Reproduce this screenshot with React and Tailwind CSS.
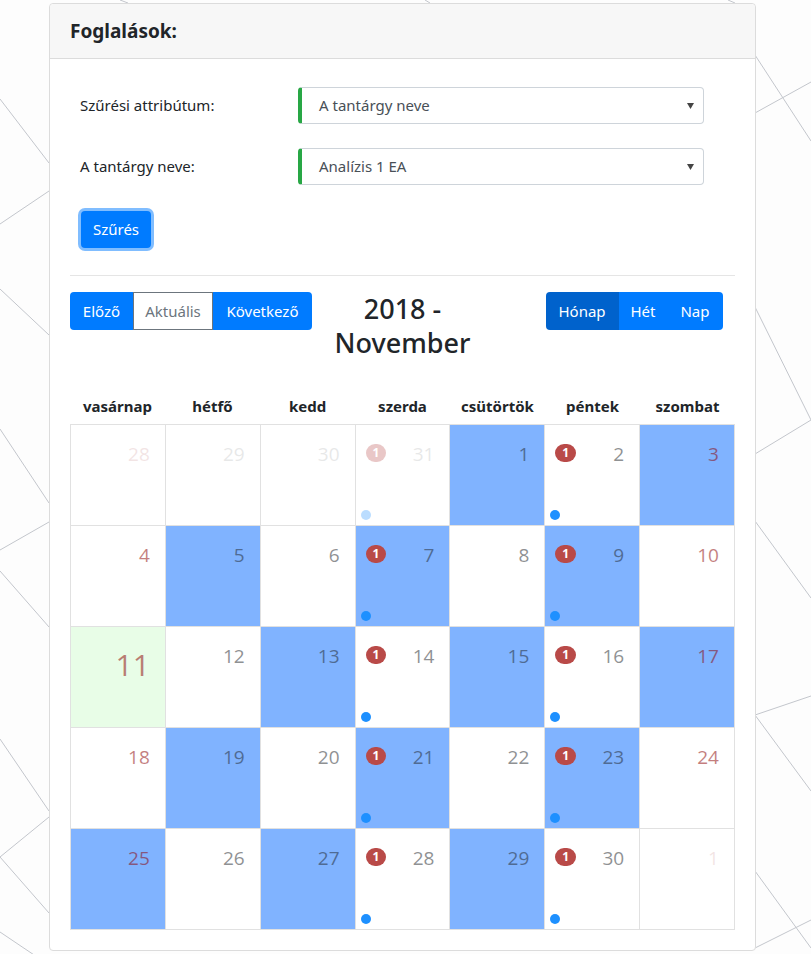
import React from 'react';

const weekdays = ['vasárnap', 'hétfő', 'kedd', 'szerda', 'csütörtök', 'péntek', 'szombat'];

// background scribbles (decorative drawing behind the card)
const bgLines = [
  [0, 99, 49, 163], [0, 224, 49, 191], [0, 289, 49, 335], [0, 429, 49, 503],
  [0, 550, 49, 522], [0, 571, 49, 627], [0, 739, 49, 811], [0, 857, 49, 817],
  [0, 857, 49, 913], [0, 932, 49, 965],
  [755, 55, 811, 141], [755, 113, 811, 82], [755, 307, 811, 420], [755, 454, 811, 420],
  [755, 521, 811, 598], [755, 715, 811, 696], [755, 715, 811, 791], [755, 871, 811, 948],
  [755, 948, 811, 920],
  [120, 0, 128, 3], [425, 0, 430, 3], [728, 0, 735, 3],
];

function buildCells() {
  const cells = [];
  [28, 29, 30, 31].forEach((d) => cells.push({ d, out: true }));
  for (let d = 1; d <= 30; d++) cells.push({ d, out: false });
  cells.push({ d: 1, out: true });
  return cells.map((c, i) => {
    const dow = i % 7;
    const today = !c.out && c.d === 11;
    return {
      ...c,
      weekend: dow === 0 || dow === 6,
      today,
      blue: !c.out && c.d % 2 === 1 && !today,
      badge: dow === 3 || dow === 5,
    };
  });
}

function DayCell({ cell }) {
  const bg = cell.today ? 'bg-[#e8fde7]' : cell.blue ? 'bg-[#80b3ff]' : 'bg-white';
  return (
    <div className={`h-[101px] border-r border-b border-[#e1e1e1] flex flex-col ${bg}`}>
      <div className="flex-1 flex justify-between items-start">
        {cell.badge ? (
          <span className={`mt-[19px] ml-[10px] inline-block rounded-[10px] bg-[#b94a48] px-[7px] py-[3px] text-[12px] leading-none font-bold text-white ${cell.out ? 'opacity-30' : ''}`}>
            1
          </span>
        ) : (
          <span />
        )}
        <span
          className={`mt-[15px] mr-[15px] leading-[1.5] font-['Open_Sans',sans-serif] ${cell.today ? 'text-[30px]' : 'text-[19px]'} ${cell.weekend ? 'text-[#8b0000]' : 'text-[#212529]'} ${cell.out ? 'opacity-10' : 'opacity-50'}`}
        >
          {cell.d}
        </span>
      </div>
      {cell.badge && (
        <div className="m-[3px] flex items-end leading-[10px]">
          <span className={`m-[2px] inline-block w-[10px] h-[10px] rounded-full bg-[#1e90ff] ${cell.out ? 'opacity-30' : ''}`} />
        </div>
      )}
    </div>
  );
}

function SelectBox({ value }) {
  return (
    <div className="w-[406px] h-[37px] flex items-center justify-between rounded-[4px] border border-[#ced4da] border-l-[4px] border-l-[#28a745] bg-white pl-[17px] pr-[9px] text-[15px] text-[#495057]">
      <span>{value}</span>
      <svg width="7" height="6" viewBox="0 0 7 6"><path d="M0 0h7L3.5 6z" fill="#444" /></svg>
    </div>
  );
}

export default function App() {
  const cells = buildCells();

  return (
    <div className="relative min-h-[954px] bg-[#fdfdfd] font-['Noto_Sans',sans-serif] text-[#212529] overflow-hidden">
      <svg className="absolute inset-0 w-full h-full" width="811" height="954">
        {bgLines.map(([x1, y1, x2, y2], i) => (
          <line key={i} x1={x1} y1={y1} x2={x2} y2={y2} stroke="#c3c6cc" strokeWidth="1" />
        ))}
      </svg>

      <div className="relative ml-[49px] mt-[3px] w-[707px] rounded-[4px] border border-[#dcdcdc] bg-white">
        {/* Card header */}
        <div className="h-[55px] flex items-center px-[20px] bg-[#f7f7f7] border-b border-[#dcdcdc] rounded-t-[4px]">
          <h5 className="text-[19px] font-bold text-[#212529]">Foglalások:</h5>
        </div>

        <div className="px-[20px] pt-[28px] pb-[20px]">
          {/* Filter form */}
          <div className="flex items-center">
            <label className="w-[228px] pl-[10px] text-[15px]">Szűrési attribútum:</label>
            <SelectBox value="A tantárgy neve" />
          </div>
          <div className="flex items-center mt-[24px]">
            <label className="w-[228px] pl-[10px] text-[15px]">A tantárgy neve:</label>
            <SelectBox value="Analízis 1 EA" />
          </div>
          <button className="mt-[26px] ml-[11px] h-[37px] w-[70px] rounded-[4px] bg-[#007bff] text-white text-[15px] ring-3 ring-[#80bdff]">
            Szűrés
          </button>

          <hr className="mt-[27px] border-t border-[#e5e5e5]" />

          {/* Calendar toolbar */}
          <div className="flex items-start mt-[16px]">
            <div className="w-[222px] flex">
              <div className="flex h-[38px] text-[15px] shrink-0">
                <span className="w-[63px] flex items-center justify-center bg-[#007bff] text-white rounded-l-[4px]">Előző</span>
                <span className="w-[80px] flex items-center justify-center bg-white text-[#6c757d] border border-[#6c757d]">Aktuális</span>
                <span className="w-[99px] flex items-center justify-center bg-[#007bff] text-white rounded-r-[4px]">Következő</span>
              </div>
            </div>
            <div className="w-[221px] text-center text-[27px] font-medium leading-[34px] text-[#212529]">
              <div>2018 -</div>
              <div>November</div>
            </div>
            <div className="flex-1 flex justify-center pl-[20px]">
              <div className="flex h-[38px] text-[15px] text-white">
                <span className="w-[73px] flex items-center justify-center bg-[#0062cc] rounded-l-[4px]">Hónap</span>
                <span className="w-[49px] flex items-center justify-center bg-[#007bff]">Hét</span>
                <span className="w-[55px] flex items-center justify-center bg-[#007bff] rounded-r-[4px]">Nap</span>
              </div>
            </div>
          </div>

          {/* Month view */}
          <div className="mt-[34px] w-[665px]">
            <div className="grid grid-cols-7 pb-[6px]">
              {weekdays.map((w) => (
                <div key={w} className="text-center text-[15px] font-bold leading-[24px]">{w}</div>
              ))}
            </div>
            <div className="grid grid-cols-7 border-t border-l border-[#e1e1e1]">
              {cells.map((c, i) => (
                <DayCell key={i} cell={c} />
              ))}
            </div>
          </div>
        </div>
      </div>
    </div>
  );
}
